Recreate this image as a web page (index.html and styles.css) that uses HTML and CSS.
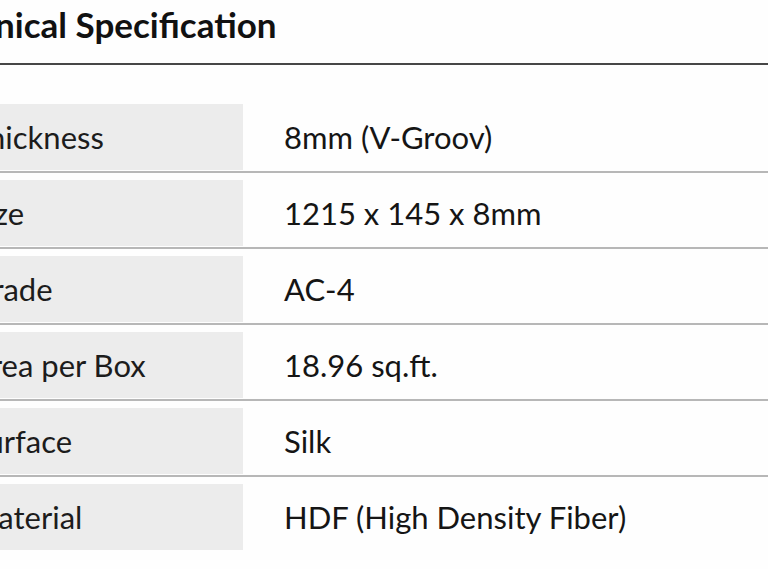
FILE: index.html
```html
<!DOCTYPE html>
<html lang="en">
<head>
<meta charset="utf-8">
<title>Technical Specification</title>
<link rel="stylesheet" href="styles.css">
</head>
<body>
<div class="page">
  <h2 class="title">Technical Specification</h2>
  <div class="spec">
    <div class="row"><div class="label">Thickness</div><div class="value">8mm (V-Groov)</div></div>
    <div class="row"><div class="label">Size</div><div class="value">1215 x 145 x 8mm</div></div>
    <div class="row"><div class="label">Grade</div><div class="value">AC-4</div></div>
    <div class="row"><div class="label">Area per Box</div><div class="value">18.96 sq.ft.</div></div>
    <div class="row"><div class="label">Surface</div><div class="value">Silk</div></div>
    <div class="row"><div class="label">Material</div><div class="value">HDF (High Density Fiber)</div></div>
  </div>
</div>
</body>
</html>
```

FILE: styles.css
```css
html, body {
  margin: 0;
  padding: 0;
  background: #fefefe;
  overflow: hidden;
}
body {
  font-family: Lato, "Open Sans", sans-serif;
  color: #151515;
}
.page {
  width: 768px;
}
.title {
  margin: 0 0 0 -77px;
  padding: 1px 0 16px 0;
  font-size: 35px;
  font-weight: 700;
  line-height: 46px;
  border-bottom: 2px solid #474747;
  color: #111;
}
.spec {
  margin-top: 39px;
  display: flex;
  flex-direction: column;
  gap: 7px;
}
.row {
  display: grid;
  grid-template-columns: 273px 1fr;
  margin-left: -30px;
  padding-bottom: 1px;
  border-bottom: 2px solid #b7b7b7;
}
.row:last-child {
  border-bottom: none;
}
.label {
  background: #ececec;
  height: 66px;
  display: flex;
  align-items: center;
  font-size: 31px;
  color: #1c1c1c;
}
.value {
  display: flex;
  align-items: center;
  padding-left: 41px;
  font-size: 31px;
  color: #151515;
}
```
